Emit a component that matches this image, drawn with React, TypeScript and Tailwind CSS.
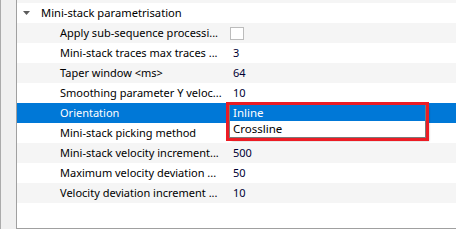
import React from "react";

type Row = {
  name: string;
  value?: string;
  checkbox?: boolean;
  selected?: boolean;
};

const rows: Row[] = [
  { name: "Apply sub-sequence processi...", checkbox: true },
  { name: "Mini-stack traces max traces ...", value: "3" },
  { name: "Taper window <ms>", value: "64" },
  { name: "Smoothing parameter Y veloc...", value: "10" },
  { name: "Orientation", selected: true },
  { name: "Mini-stack picking method" },
  { name: "Mini-stack velocity increment...", value: "500" },
  { name: "Maximum velocity deviation ...", value: "50" },
  { name: "Velocity deviation increment ...", value: "10" },
];

function PropertyRow({ row, index }: { row: Row; index: number }) {
  const striped = index % 2 === 0;
  const bg = row.selected ? "bg-[#0078d7] text-white" : striped ? "bg-[#f5f5f5] text-black" : "bg-white text-black";
  return (
    <div className={`flex h-5 items-center ${bg}`}>
      <div className="w-[211px] shrink-0 overflow-hidden whitespace-nowrap pl-[43px]">{row.name}</div>
      <div className="flex flex-1 items-center pl-[5px] text-[#000033]">
        {row.checkbox ? (
          <span className="ml-[-3px] block h-[13px] w-[14px] border border-[#bcbcbc] bg-white" />
        ) : (
          row.value
        )}
      </div>
    </div>
  );
}

export default function App() {
  return (
    <div className="relative flex h-[229px] w-[456px] overflow-hidden bg-white text-[11px] leading-5 [font-family:'Noto_Sans',sans-serif]">
      {/* left gutter */}
      <div className="w-[17px] shrink-0 border-l border-r border-l-[#ababab] border-r-[#a0a0a0] bg-[#f0f0f0]" />

      {/* property grid */}
      <div className="flex flex-1 flex-col border-b border-[#a0a0a0]">
        <div className="h-[3px] bg-[#f5f5f5]" />
        <div className="flex h-5 items-center bg-white text-black">
          <svg width="7" height="4" viewBox="0 0 7 4" className="ml-[6px] mr-[11px] mt-[-1px]">
            <polygon points="0,0 7,0 3.5,4" fill="#5c5c5c" />
          </svg>
          <span className="whitespace-nowrap text-[11.2px]">Mini-stack parametrisation</span>
        </div>
        {rows.map((row, i) => (
          <PropertyRow key={row.name} row={row} index={i} />
        ))}
        <div className="flex-1 bg-white" />
      </div>

      {/* combo popup */}
      <div className="absolute left-[229px] top-[104px] w-[197px] border border-[#7a7a7a] bg-white shadow-[3px_3px_2px_rgba(0,0,0,0.3)]">
        <div className="h-[16px] bg-[#0078d7] pl-[3px] text-[11.5px] leading-4 text-white">Inline</div>
        <div className="h-[16px] pl-[3px] text-[11.5px] leading-4 text-black">Crossline</div>
      </div>

      {/* annotation box */}
      <div className="absolute left-[226px] top-[102px] h-[39px] w-[203px] border-[3px] border-[#ec1c24]" />
    </div>
  );
}
